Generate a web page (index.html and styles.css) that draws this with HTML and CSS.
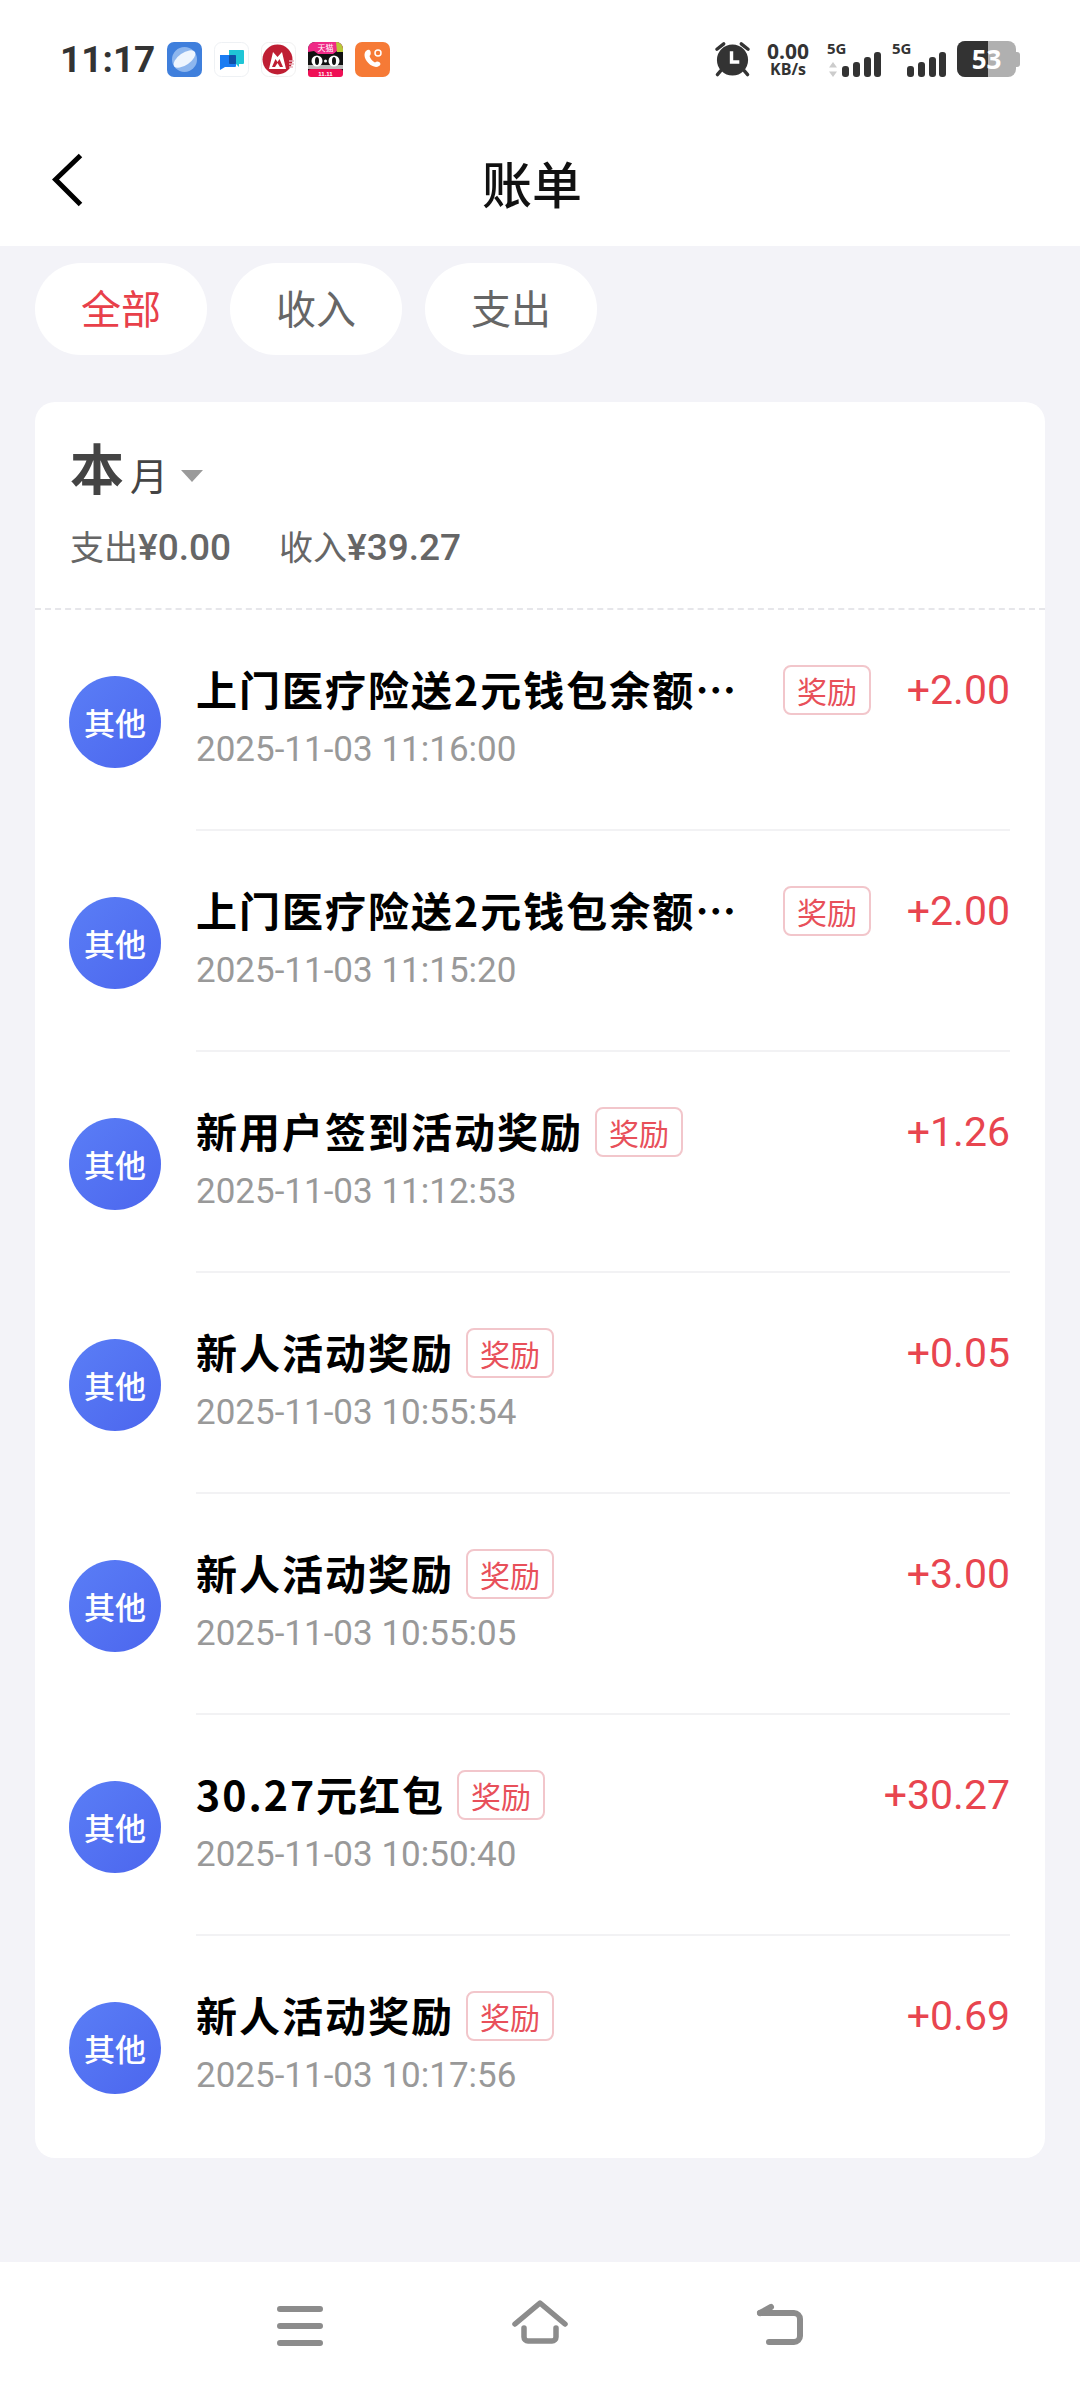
FILE: index.html
```html
<!DOCTYPE html>
<html lang="zh-CN">
<head>
<meta charset="utf-8">
<title>账单</title>
<link rel="stylesheet" href="styles.css">
</head>
<body>
<div class="page">
  <header class="top">
    <div class="status">
      <div class="status-left">
        <span class="clock">11:17</span>
        <div class="apps">
          <svg class="app" viewBox="0 0 35 35"><rect width="35" height="35" rx="7" fill="#3f7fdc"/><circle cx="17.500" cy="17.500" r="12.500" fill="#8db6ee"/><ellipse cx="17.500" cy="17" rx="12.500" ry="6" transform="rotate(-35 17.500 17)" fill="#eef5fe"/></svg>
          <svg class="app" viewBox="0 0 35 35"><rect x=".5" y=".5" width="34" height="34" rx="7" fill="#fff" stroke="#eef1f4"/><path d="M15 8h14a1 1 0 0 1 1 1v12a1 1 0 0 1-1 1h-4v3l-3-3h-7z" fill="#1fc5d6"/><path d="M6 13h15a1 1 0 0 1 1 1v10a1 1 0 0 1-1 1H11l-5 3z" fill="#1a7cf2"/><rect x="15" y="13" width="7" height="9" rx="1" fill="#0f4fa8"/></svg>
          <svg class="app" viewBox="0 0 35 35"><rect x=".5" y=".5" width="34" height="34" rx="7" fill="#fff" stroke="#f0f0f0"/><circle cx="16.500" cy="17.500" r="15" fill="#bf1e33"/><path d="M8 27 12 10l4.500 5L21 10l4 17z" fill="#fff"/><path d="M11 25l3.500-8 2 3 2-3 3.500 8z" fill="#bf1e33"/><path d="M16.500 21l2.500 4h-5z" fill="#fff"/><path d="M28 19h5M28 22h5M28 25h4" stroke="#e9b3ba" stroke-width="1.500"/></svg>
          <svg class="app" viewBox="0 0 35 35"><rect width="35" height="35" rx="7" fill="#111"/><path d="M0 7a7 7 0 0 1 7-7h21a7 7 0 0 1 7 7v3l-6-1-4 3H10L6 9l-6 1z" fill="#ef2a86"/><path d="M28 0a7 7 0 0 1 7 7v3h-6z" fill="#b9c93a"/><rect y="27" width="35" height="8" rx="3" fill="#ef0f55"/><rect y="23" width="35" height="4" fill="#bbb"/><circle cx="9" cy="19" r="5.500" fill="#fff"/><circle cx="26" cy="19" r="5.500" fill="#fff"/><ellipse cx="9" cy="19" rx="2" ry="4" fill="#111"/><ellipse cx="26" cy="19" rx="2" ry="4" fill="#111"/><circle cx="17.500" cy="19" r="1.500" fill="#fff"/><text class="app-mini" x="17.500" y="9">天猫</text><text class="app-micro" x="17.500" y="33.500">11.11</text></svg>
          <svg class="app" viewBox="0 0 35 35"><rect width="35" height="35" rx="7" fill="#f67a36"/><path d="M11 9c2-2 4-1.500 4.500.5.400 2 .5 3-1 4.500 1 3 2.500 5 5.500 6.500 1.500-1.500 3-1.300 4.500-.3 1.500 1.300 1.200 2.800-.5 3.800C19 27.500 9.500 20 9.500 13c0-1.500.5-3 1.500-4z" fill="#fff"/><circle cx="23" cy="11" r="3" fill="none" stroke="#fff" stroke-width="1.500"/></svg>
        </div>
      </div>
      <div class="status-right">
        <svg class="alarm" viewBox="0 0 38 36"><g stroke="#333" stroke-linecap="round" fill="none"><path d="M3 8 10 2.500M35 8 28 2.500" stroke-width="3.500"/><path d="M7 30 3.500 34M31 30l3.500 4" stroke-width="3.500"/></g><circle cx="19" cy="19" r="16" fill="#333"/><path d="M18 10v11h8" fill="none" stroke="#fff" stroke-width="3.500"/></svg>
        <div class="speed"><span class="speed-num">0.00</span><span class="speed-unit">KB/s</span></div>
        <div class="sim">
          <span class="net">5G</span>
          <svg class="arrows" viewBox="0 0 10 15"><path d="M5 0l4 5.500H1zM5 15l-4-5.500h8z" fill="#ccc"/></svg>
          <svg class="bars" viewBox="0 0 39 25"><g fill="#333"><rect y="14" width="7" height="11" rx="3"/><rect x="11" y="10" width="7" height="15" rx="3"/><rect x="22" y="5" width="7" height="20" rx="3"/><rect x="32" width="7" height="25" rx="3"/></g></svg>
        </div>
        <div class="sim">
          <span class="net">5G</span>
          <svg class="bars" viewBox="0 0 39 25"><g fill="#333"><rect y="14" width="7" height="11" rx="3"/><rect x="11" y="10" width="7" height="15" rx="3"/><rect x="22" y="5" width="7" height="20" rx="3"/><rect x="32" width="7" height="25" rx="3"/></g></svg>
        </div>
        <div class="battery"><div class="battery-body"><div class="battery-fill"></div><span class="battery-num">53</span></div><div class="battery-cap"></div></div>
      </div>
    </div>
    <nav class="nav">
      <svg class="back" viewBox="0 0 32 54"><path d="M28.500 2.500 3.500 26.500l25 25" fill="none" stroke="#000" stroke-width="5"/></svg>
      <h1 class="nav-title">账单</h1>
    </nav>
  </header>

  <main class="content">
    <div class="chips">
      <span class="chip chip-on">全部</span>
      <span class="chip">收入</span>
      <span class="chip">支出</span>
    </div>

    <section class="card">
      <div class="summary">
        <div class="month"><span class="month-big">本</span><span class="month-small">月</span><span class="caret"></span></div>
        <div class="totals"><span class="total">支出<b>¥0.00</b></span><span class="total">收入<b>¥39.27</b></span></div>
      </div>

      <div class="row">
        <div class="avatar">其他</div>
        <div class="row-body">
          <div class="line"><span class="name name-clip">上门医疗险送2元钱包余额…</span><span class="tag">奖励</span><span class="amount">+2.00</span></div>
          <div class="date">2025-11-03 11:16:00</div>
        </div>
      </div>
      <div class="row">
        <div class="avatar">其他</div>
        <div class="row-body">
          <div class="line"><span class="name name-clip">上门医疗险送2元钱包余额…</span><span class="tag">奖励</span><span class="amount">+2.00</span></div>
          <div class="date">2025-11-03 11:15:20</div>
        </div>
      </div>
      <div class="row">
        <div class="avatar">其他</div>
        <div class="row-body">
          <div class="line"><span class="name">新用户签到活动奖励</span><span class="tag">奖励</span><span class="amount">+1.26</span></div>
          <div class="date">2025-11-03 11:12:53</div>
        </div>
      </div>
      <div class="row">
        <div class="avatar">其他</div>
        <div class="row-body">
          <div class="line"><span class="name">新人活动奖励</span><span class="tag">奖励</span><span class="amount">+0.05</span></div>
          <div class="date">2025-11-03 10:55:54</div>
        </div>
      </div>
      <div class="row">
        <div class="avatar">其他</div>
        <div class="row-body">
          <div class="line"><span class="name">新人活动奖励</span><span class="tag">奖励</span><span class="amount">+3.00</span></div>
          <div class="date">2025-11-03 10:55:05</div>
        </div>
      </div>
      <div class="row">
        <div class="avatar">其他</div>
        <div class="row-body">
          <div class="line"><span class="name">30.27元红包</span><span class="tag">奖励</span><span class="amount">+30.27</span></div>
          <div class="date">2025-11-03 10:50:40</div>
        </div>
      </div>
      <div class="row row-last">
        <div class="avatar">其他</div>
        <div class="row-body">
          <div class="line"><span class="name">新人活动奖励</span><span class="tag">奖励</span><span class="amount">+0.69</span></div>
          <div class="date">2025-11-03 10:17:56</div>
        </div>
      </div>
    </section>
  </main>

  <footer class="softkeys">
    <svg class="key key-menu" viewBox="0 0 46 40"><path d="M3 3h40M3 20h40M3 37h40" stroke="#8c8c8c" stroke-width="6" stroke-linecap="round"/></svg>
    <svg class="key key-home" viewBox="0 0 56 44"><g fill="none" stroke="#8c8c8c" stroke-width="5.500" stroke-linecap="round" stroke-linejoin="round"><path d="M3 24 28 3l25 21"/><path d="M12 28v9a4 4 0 0 0 4 4h24a4 4 0 0 0 4-4v-9"/></g></svg>
    <svg class="key key-back" viewBox="0 0 47 44"><g fill="none" stroke="#8c8c8c" stroke-width="6" stroke-linecap="round" stroke-linejoin="round"><path d="M4 12h34a6 6 0 0 1 6 6v17a6 6 0 0 1-6 6H13"/><path d="M4 12l11-6"/></g></svg>
  </footer>
</div>
</body>
</html>
```

FILE: styles.css
```css
* {
  box-sizing: border-box;
}

html,
body {
  margin: 0;
  padding: 0;
}

body {
  font-family: "Noto Sans CJK SC", "Noto Sans", Roboto, sans-serif;
  background: #f3f3f8;
}

.page {
  width: 1080px;
  height: 2388px;
  display: flex;
  flex-direction: column;
  background: #f3f3f8;
  overflow: hidden;
}

/* Status bar and title bar */
.top {
  height: 246px;
  background: #fff;
  flex: none;
}

.status {
  height: 118px;
  padding: 0 60px;
  display: flex;
  justify-content: space-between;
  align-items: center;
}

.status-left,
.status-right,
.apps {
  display: flex;
  align-items: center;
}

.clock {
  width: 107px;
  font: 700 37px/1 Roboto, sans-serif;
  color: #333;
}

.apps {
  gap: 12px;
}

.app {
  width: 35px;
  height: 35px;
  display: block;
}

.app-mini {
  font-size: 8px;
  fill: #fff;
  text-anchor: middle;
}

.app-micro {
  font: 700 6px "Liberation Sans", sans-serif;
  fill: #fff;
  text-anchor: middle;
}

.alarm {
  width: 37px;
  height: 36px;
  margin-right: 14px;
}

.speed {
  width: 46px;
  margin-right: 16px;
  display: flex;
  flex-direction: column;
  align-items: center;
  font-family: "Open Sans", sans-serif;
  font-weight: 700;
  color: #333;
}

.speed-num {
  font-size: 21px;
  line-height: 20px;
}

.speed-unit {
  font-size: 16px;
  line-height: 17px;
}

.sim {
  position: relative;
  width: 54px;
  height: 36px;
  margin-right: 11px;
}

.net {
  position: absolute;
  left: 0;
  top: -2px;
  font: 700 15px/18px "Open Sans", sans-serif;
  color: #333;
}

.arrows {
  position: absolute;
  left: 1px;
  bottom: 0;
  width: 10px;
  height: 15px;
}

.bars {
  position: absolute;
  right: 0;
  bottom: 0;
  width: 39px;
  height: 25px;
}

.battery {
  display: flex;
  align-items: center;
}

.battery-body {
  position: relative;
  width: 59px;
  height: 36px;
  border-radius: 8px;
  background: #b0b0b0;
  overflow: hidden;
}

.battery-fill {
  width: 31px;
  height: 100%;
  background: #333;
}

.battery-num {
  position: absolute;
  inset: 0;
  text-align: center;
  font: 700 26px/36px "Open Sans", sans-serif;
  color: #fff;
}

.battery-cap {
  width: 4px;
  height: 15px;
  border-radius: 0 3px 3px 0;
  background: #b0b0b0;
}

.nav {
  position: relative;
  height: 128px;
  padding-right: 16px;
  display: flex;
  align-items: center;
  justify-content: center;
}

.back {
  position: absolute;
  left: 52px;
  top: 35px;
  width: 32px;
  height: 54px;
}

.nav-title {
  margin: 0;
  font-size: 50px;
  line-height: 60px;
  font-weight: 500;
  color: #111;
}

/* Filter chips and bill card */
.content {
  flex: 1;
  padding: 17px 35px 0;
}

.chips {
  display: flex;
  gap: 23px;
}

.chip {
  width: 172px;
  height: 92px;
  padding-bottom: 4px;
  border-radius: 46px;
  background: #fff;
  display: flex;
  align-items: center;
  justify-content: center;
  font-size: 40px;
  color: #666;
}

.chip-on {
  color: #e8404a;
}

.card {
  margin-top: 47px;
  height: 1756px;
  border-radius: 20px;
  background: #fff;
}

.summary {
  height: 208px;
  padding: 29px 35px 0;
  border-bottom: 2px dashed #e6e6ea;
}

.month {
  display: flex;
  align-items: baseline;
  color: #444;
  height: 72px;
}

.month-big {
  font-size: 54px;
  line-height: 72px;
  font-weight: 700;
}

.month-small {
  font-size: 38px;
  line-height: 72px;
  margin-left: 6px;
}

.caret {
  width: 0;
  height: 0;
  margin-left: 13px;
  border-left: 11px solid transparent;
  border-right: 11px solid transparent;
  border-top: 12px solid #9a9a9a;
  align-self: center;
  margin-top: 18px;
}

.totals {
  display: flex;
  gap: 48px;
  margin-top: 20px;
}

.total {
  font-size: 34px;
  line-height: 46px;
  color: #666;
}

.total b {
  font-family: Roboto, sans-serif;
  font-size: 37px;
  font-weight: 500;
}

.row {
  height: 221px;
  padding-left: 34px;
  padding-right: 35px;
  display: flex;
}

.avatar {
  flex: none;
  width: 92px;
  height: 92px;
  margin-top: 66px;
  padding-bottom: 2px;
  border-radius: 50%;
  background: linear-gradient(135deg, #5a7ef6, #4c66ee);
  display: flex;
  align-items: center;
  justify-content: center;
  font-size: 31px;
  font-weight: 500;
  color: #fff;
}

.row-body {
  flex: 1;
  margin-left: 35px;
  padding-top: 53px;
  border-bottom: 2px solid #f2f2f4;
}

.row-last .row-body {
  border-bottom: 0;
}

.line {
  display: flex;
  align-items: center;
  height: 54px;
}

.name {
  padding-bottom: 4px;
  font-size: 41px;
  line-height: 54px;
  font-weight: 700;
  letter-spacing: 2px;
  color: #000;
  white-space: nowrap;
}

.name-clip {
  width: 575px;
}

.tag {
  flex: none;
  width: 88px;
  height: 50px;
  margin-left: 12px;
  border: 2px solid #f2c6cb;
  border-radius: 8px;
  display: flex;
  align-items: center;
  justify-content: center;
  font-size: 30px;
  color: #e8505a;
}

.amount {
  margin-left: auto;
  font-family: Roboto, sans-serif;
  font-size: 41px;
  color: #e8454f;
}

.date {
  margin-top: 11px;
  font-family: Roboto, sans-serif;
  font-size: 35px;
  line-height: 44px;
  color: #999;
}

/* Android soft keys */
.softkeys {
  flex: none;
  position: relative;
  height: 126px;
  background: #fff;
}

.key {
  position: absolute;
}

.key-menu {
  left: 277px;
  top: 44px;
  width: 46px;
  height: 40px;
}

.key-home {
  left: 512px;
  top: 38px;
  width: 56px;
  height: 44px;
}

.key-back {
  left: 756px;
  top: 39px;
  width: 47px;
  height: 44px;
}
```
